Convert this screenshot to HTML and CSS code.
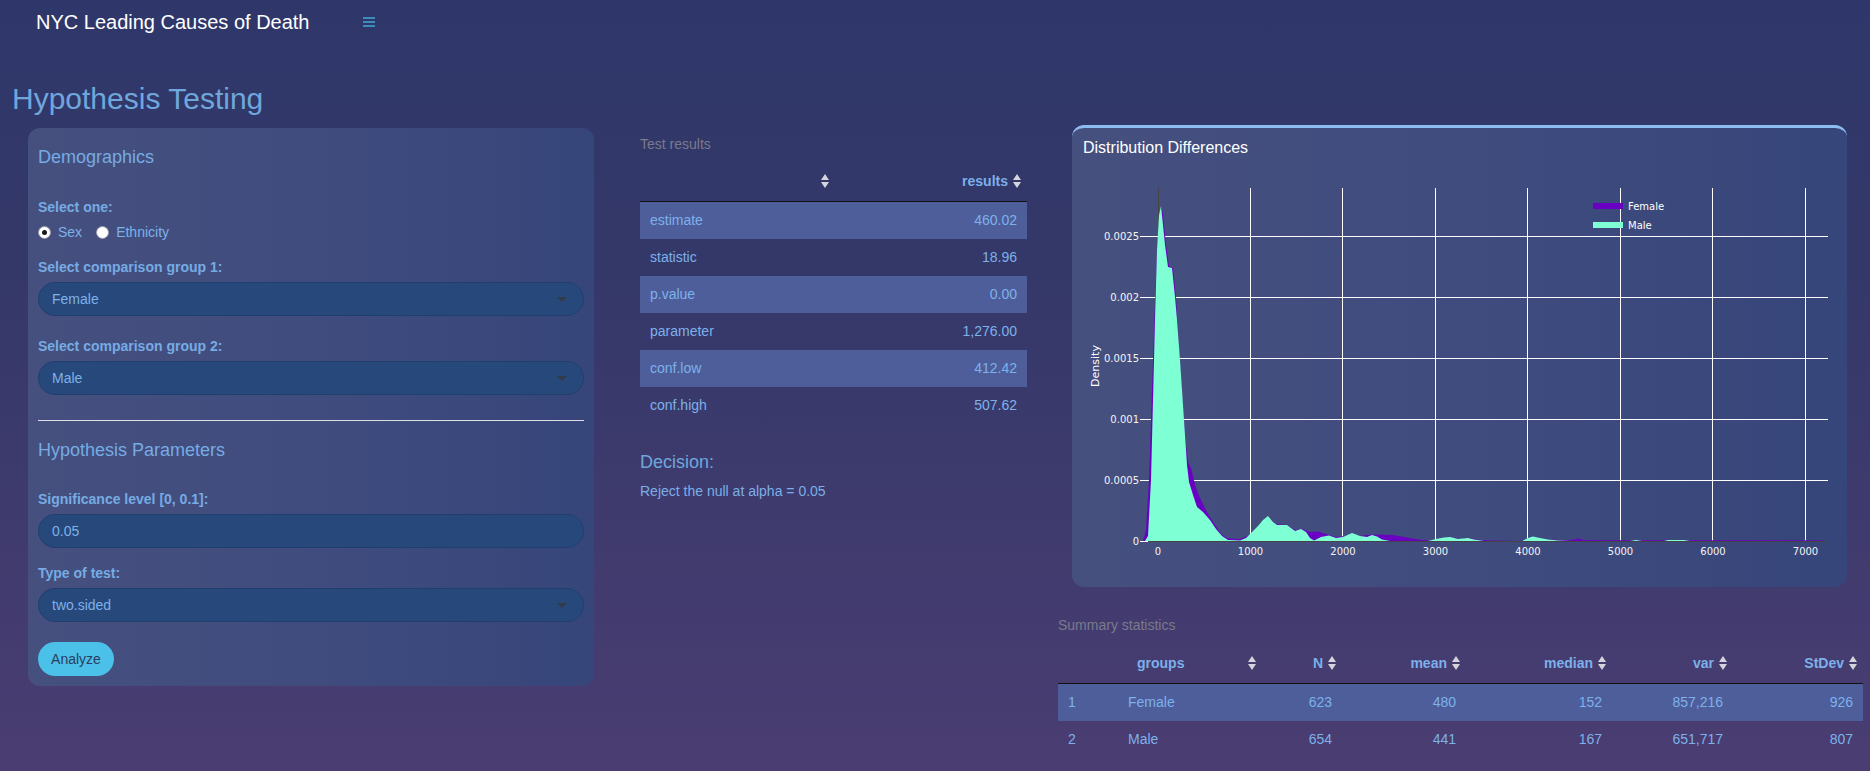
FILE: index.html
```html
<!DOCTYPE html>
<html>
<head>
<meta charset="utf-8">
<title>NYC Leading Causes of Death</title>
<link rel="stylesheet" href="styles.css">
</head>
<body>
<header class="topbar">
  <span class="brand">NYC Leading Causes of Death</span>
  <svg class="burger" width="12" height="10" viewBox="0 0 12 10"><rect x="0" y="0" width="12" height="2"/><rect x="0" y="4" width="12" height="2"/><rect x="0" y="8" width="12" height="2"/></svg>
</header>
<main class="content">
  <h2 class="page-title">Hypothesis Testing</h2>
  <div class="row">
    <section class="col-left">
      <div class="box">
        <h3 class="box-title">Demographics</h3>
        <span class="lbl lbl-first">Select one:</span>
        <div class="radios">
          <label class="radio"><span class="rb checked"></span>Sex</label>
          <label class="radio radio-2"><span class="rb"></span>Ethnicity</label>
        </div>
        <span class="lbl lbl-g1">Select comparison group 1:</span>
        <div class="select"><span>Female</span><span class="caret"></span></div>
        <span class="lbl lbl-g2">Select comparison group 2:</span>
        <div class="select"><span>Male</span><span class="caret"></span></div>
        <hr class="divider">
        <h3 class="box-title">Hypothesis Parameters</h3>
        <span class="lbl lbl-sig">Significance level [0, 0.1]:</span>
        <div class="select"><span>0.05</span></div>
        <span class="lbl lbl-type">Type of test:</span>
        <div class="select"><span>two.sided</span><span class="caret"></span></div>
        <button class="btn">Analyze</button>
      </div>
    </section>

    <section class="col-mid">
      <div class="caption">Test results</div>
      <table class="dt dt-test">
        <colgroup><col class="c-name"><col class="c-res"></colgroup>
        <thead>
          <tr>
            <th><div class="th-in"><span></span><svg class="sort" width="8" height="16" viewBox="0 0 8 16"><path d="M0 7L4 1L8 7Z M0 9L8 9L4 15Z"/></svg></div></th>
            <th><div class="th-in"><span>results</span><svg class="sort" width="8" height="16" viewBox="0 0 8 16"><path d="M0 7L4 1L8 7Z M0 9L8 9L4 15Z"/></svg></div></th>
          </tr>
        </thead>
        <tbody>
          <tr class="odd"><td>estimate</td><td class="num">460.02</td></tr>
          <tr><td>statistic</td><td class="num">18.96</td></tr>
          <tr class="odd"><td>p.value</td><td class="num">0.00</td></tr>
          <tr><td>parameter</td><td class="num">1,276.00</td></tr>
          <tr class="odd"><td>conf.low</td><td class="num">412.42</td></tr>
          <tr><td>conf.high</td><td class="num">507.62</td></tr>
        </tbody>
      </table>
      <h4 class="decision">Decision:</h4>
      <p class="decision-text">Reject the null at alpha = 0.05</p>
    </section>

    <section class="col-right">
      <div class="plot-box">
        <div class="plot-title">Distribution Differences</div>
        <svg class="plot" width="775" height="420" viewBox="1072 158 775 420">
          <g class="grid" stroke="#ffffff" stroke-width="1">
            <line x1="1250.5" y1="188" x2="1250.5" y2="541"/>
            <line x1="1342.5" y1="188" x2="1342.5" y2="541"/>
            <line x1="1435.5" y1="188" x2="1435.5" y2="541"/>
            <line x1="1527.5" y1="188" x2="1527.5" y2="541"/>
            <line x1="1620.5" y1="188" x2="1620.5" y2="541"/>
            <line x1="1712.5" y1="188" x2="1712.5" y2="541"/>
            <line x1="1805.5" y1="188" x2="1805.5" y2="541"/>
            <line x1="1140" y1="236.5" x2="1828" y2="236.5"/>
            <line x1="1140" y1="297.5" x2="1828" y2="297.5"/>
            <line x1="1140" y1="358.5" x2="1828" y2="358.5"/>
            <line x1="1140" y1="419.5" x2="1828" y2="419.5"/>
            <line x1="1140" y1="480.5" x2="1828" y2="480.5"/>
            <line x1="1140" y1="541.5" x2="1148" y2="541.5"/>
          </g>
          <g stroke="#444444" stroke-width="1">
            <line x1="1158.5" y1="188" x2="1158.5" y2="541"/>
            <line x1="1148" y1="541.5" x2="1828" y2="541.5"/>
          </g>
          <path fill="#6a00c2" d="M1143,541 L1146,530 L1149,480 L1151,420 L1154,330 L1157,250 L1160,212 L1161.5,207 L1163,215 L1166,245 L1169,266 L1173,268 L1176,298 L1179,350 L1183,410 L1186,445 L1188,462 L1191,468 L1193,476 L1196,488 L1200,498 L1205,508 L1208,514 L1215,525 L1222,535 L1228,538.5 L1240,539 L1250,535 L1258,528 L1264,521 L1268,517 L1276,524 L1287,525 L1295,530 L1302,529 L1310,532 L1318,531.5 L1326,534 L1336,537 L1345,536 L1352,534 L1360,536 L1366,535 L1376,534.5 L1392,535 L1402,536.5 L1412,538.5 L1422,540 L1432,540.5 L1450,537.5 L1460,539 L1470,538.5 L1480,540 L1492,540.5 L1520,541 L1533,537 L1546,539.5 L1560,540 L1572,540 L1578,538.5 L1584,540 L1600,540.3 L1700,540.3 L1760,540.2 L1800,540.3 L1824,540.4 L1824,541 Z"/>
          <path fill="#7fffd4" d="M1145,541 L1148,536 L1151,480 L1153,400 L1155,320 L1157,250 L1159,215 L1161,206 L1163,225 L1165,245 L1168,267 L1172,268 L1175,297 L1177,320 L1180,360 L1184,420 L1187,465 L1189,482 L1193,495 L1197,507 L1203,512 L1210,520 L1216,529 L1222,536 L1228,540 L1240,540.5 L1246,538 L1251,533 L1258,526 L1263,520 L1268,516 L1273,522 L1277,525 L1287,525 L1291,528 L1295,531 L1301,529 L1306,532 L1310,538 L1314,540.5 L1321,537 L1329,535.5 L1336,538 L1343,537 L1352,533 L1360,536 L1367,537 L1372,535 L1377,536.5 L1382,539.5 L1390,541 L1428,541 L1436,539 L1444,537.5 L1450,537 L1458,539 L1463,538.5 L1468,538 L1474,539.5 L1484,541 L1522,541 L1528,538 L1533,536.5 L1540,538 L1548,539.5 L1558,540.5 L1570,541 L1630,541 L1636,540 L1642,541 L1664,541 L1668,540 L1684,540 L1690,541 Z"/>
          <g class="ticks" fill="#f4f4f4" font-size="10">
            <text x="1139" y="240" text-anchor="end">0.0025</text>
            <text x="1139" y="301" text-anchor="end">0.002</text>
            <text x="1139" y="362" text-anchor="end">0.0015</text>
            <text x="1139" y="423" text-anchor="end">0.001</text>
            <text x="1139" y="484" text-anchor="end">0.0005</text>
            <text x="1139" y="545" text-anchor="end">0</text>
            <text x="1158" y="555" text-anchor="middle">0</text>
            <text x="1250.5" y="555" text-anchor="middle">1000</text>
            <text x="1343" y="555" text-anchor="middle">2000</text>
            <text x="1435.5" y="555" text-anchor="middle">3000</text>
            <text x="1528" y="555" text-anchor="middle">4000</text>
            <text x="1620.5" y="555" text-anchor="middle">5000</text>
            <text x="1713" y="555" text-anchor="middle">6000</text>
            <text x="1805.5" y="555" text-anchor="middle">7000</text>
          </g>
          <text class="axis-title" x="1099" y="366" text-anchor="middle" transform="rotate(-90 1099 366)" fill="#ffffff" font-size="11">Density</text>
          <g class="legend">
            <rect x="1593" y="203" width="30" height="6" fill="#6a00c2"/>
            <rect x="1593" y="222" width="30" height="6" fill="#7fffd4"/>
            <text x="1628" y="209.5" fill="#ffffff" font-size="10">Female</text>
            <text x="1628" y="228.5" fill="#ffffff" font-size="10">Male</text>
          </g>
        </svg>
      </div>

      <div class="caption caption-sum">Summary statistics</div>
      <table class="dt dt-sum">
        <colgroup>
          <col class="s-rn"><col class="s-grp"><col class="s-n"><col class="s-mean"><col class="s-med"><col class="s-var"><col class="s-sd">
        </colgroup>
        <thead>
          <tr>
            <th class="th-empty"></th>
            <th class="th-left"><div class="th-in th-between"><span>groups</span><svg class="sort" width="8" height="16" viewBox="0 0 8 16"><path d="M0 7L4 1L8 7Z M0 9L8 9L4 15Z"/></svg></div></th>
            <th><div class="th-in"><span>N</span><svg class="sort" width="8" height="16" viewBox="0 0 8 16"><path d="M0 7L4 1L8 7Z M0 9L8 9L4 15Z"/></svg></div></th>
            <th><div class="th-in"><span>mean</span><svg class="sort" width="8" height="16" viewBox="0 0 8 16"><path d="M0 7L4 1L8 7Z M0 9L8 9L4 15Z"/></svg></div></th>
            <th><div class="th-in"><span>median</span><svg class="sort" width="8" height="16" viewBox="0 0 8 16"><path d="M0 7L4 1L8 7Z M0 9L8 9L4 15Z"/></svg></div></th>
            <th><div class="th-in"><span>var</span><svg class="sort" width="8" height="16" viewBox="0 0 8 16"><path d="M0 7L4 1L8 7Z M0 9L8 9L4 15Z"/></svg></div></th>
            <th><div class="th-in"><span>StDev</span><svg class="sort" width="8" height="16" viewBox="0 0 8 16"><path d="M0 7L4 1L8 7Z M0 9L8 9L4 15Z"/></svg></div></th>
          </tr>
        </thead>
        <tbody>
          <tr class="odd"><td>1</td><td>Female</td><td class="num">623</td><td class="num">480</td><td class="num">152</td><td class="num">857,216</td><td class="num">926</td></tr>
          <tr><td>2</td><td>Male</td><td class="num">654</td><td class="num">441</td><td class="num">167</td><td class="num">651,717</td><td class="num">807</td></tr>
        </tbody>
      </table>
    </section>
  </div>
</main>
</body>
</html>
```

FILE: styles.css
```css
* { box-sizing: border-box; }

html, body { margin: 0; padding: 0; }

body {
  width: 1870px;
  height: 771px;
  overflow: hidden;
  font-family: "Liberation Sans", Arial, sans-serif;
  font-size: 14px;
  line-height: 20px;
  color: #7db1ea;
  background: linear-gradient(180deg, #2f376a 0%, #343869 35%, #4a3d72 100%);
}

/* top bar */
.topbar {
  display: flex;
  align-items: center;
  height: 44px;
}
.brand {
  margin-left: 36px;
  font-size: 20px;
  line-height: 20px;
  color: #ffffff;
}
.burger {
  margin-left: 53px;
  fill: #3c8dbc;
}

.page-title {
  margin: 38px 0 10px 12px;
  font-size: 30px;
  line-height: 33px;
  font-weight: normal;
  color: #6fa7dd;
}

.row {
  display: flex;
  align-items: flex-start;
}

/* left column */
.col-left {
  margin-left: 28px;
  width: 566px;
  margin-top: 3px;
}
.box {
  border-radius: 12px;
  background: linear-gradient(90deg, #45507f 0%, #404c7e 50%, #36457a 100%);
  padding: 19px 10px 10px 10px;
  display: flex;
  flex-direction: column;
  align-items: stretch;
}
.box-title {
  margin: 0;
  font-size: 18px;
  line-height: 20px;
  font-weight: normal;
  color: #76abe3;
}
.lbl {
  display: block;
  font-weight: bold;
  color: #76abe3;
  line-height: 20px;
  margin-bottom: 5px;
}
.lbl-first { margin-top: 30px; margin-bottom: 5px; }
.lbl-g1 { margin-top: 15px; }
.lbl-g2 { margin-top: 20px; }
.lbl-sig { margin-top: 29px; }
.lbl-type { margin-top: 15px; }

.radios {
  display: flex;
  align-items: center;
  height: 20px;
  color: #7db1ea;
}
.radio {
  display: flex;
  align-items: center;
}
.radio-2 { margin-left: 14px; }
.rb {
  width: 13px;
  height: 13px;
  border-radius: 50%;
  background: #ffffff;
  border: 1px solid #9a9aa8;
  margin-right: 7px;
  display: flex;
  align-items: center;
  justify-content: center;
}
.rb.checked::after {
  content: "";
  width: 5px;
  height: 5px;
  border-radius: 50%;
  background: #1a1a1a;
}

.select {
  height: 34px;
  border-radius: 17px;
  background: #27487a;
  border: 1px solid #213f6c;
  display: flex;
  align-items: center;
  justify-content: space-between;
  padding: 0 16px 0 13px;
  color: #7db1ea;
}
.caret {
  width: 0;
  height: 0;
  border-left: 5px solid transparent;
  border-right: 5px solid transparent;
  border-top: 5px solid #333a4a;
}

.divider {
  margin: 25px 0 19px 0;
  border: 0;
  border-top: 1px solid #dedee6;
  height: 0;
}

.btn {
  align-self: flex-start;
  margin-top: 20px;
  height: 34px;
  width: 76px;
  border: 0;
  border-radius: 17px;
  background: #4bc0e8;
  color: #2b3d60;
  font-family: "Liberation Sans", Arial, sans-serif;
  font-size: 14px;
  padding: 0;
}

/* middle column */
.col-mid {
  margin-left: 46px;
  width: 387px;
  margin-top: 9px;
}
.caption {
  color: #7a7a8c;
  line-height: 20px;
  margin-bottom: 7px;
}

.dt {
  border-collapse: collapse;
  table-layout: fixed;
  width: 100%;
}
.dt th {
  padding: 10px 6px 10px 10px;
  line-height: 20px;
  font-weight: bold;
  color: #7cb0ea;
  border-bottom: 1px solid #111111;
}
.th-in {
  display: flex;
  align-items: center;
  justify-content: flex-end;
  gap: 5px;
}
.th-between { justify-content: space-between; }
.dt th.th-left { padding-left: 19px; }
.sort { fill: #d4d4dc; flex: none; }

.dt td {
  padding: 8px 10px 9px 10px;
  line-height: 20px;
  color: #7db1ea;
  white-space: nowrap;
}
.dt td.num { text-align: right; }
.dt tr.odd td { background: #4e5e9b; }

.c-name { width: 195px; }
.c-res { width: 192px; }

.decision {
  margin: 28px 0 0 0;
  font-size: 18px;
  line-height: 20px;
  font-weight: normal;
  color: #6fa7dd;
}
.decision-text {
  margin: 9px 0 0 0;
  color: #7bafe6;
}

/* right column */
.col-right {
  margin-left: 31px;
  width: 805px;
}
.plot-box {
  margin: 0 16px 0 14px;
  border-top: 3px solid #8dbdf0;
  border-radius: 12px;
  background: linear-gradient(90deg, #45507f 0%, #404c7e 50%, #36457a 100%);
  padding: 10px 0 9px 0;
}
.plot-title {
  margin-left: 11px;
  color: #ffffff;
  font-size: 16px;
  line-height: 20px;
}
.plot {
  display: block;
  font-family: "DejaVu Sans", Verdana, sans-serif;
}

.caption-sum {
  margin-top: 28px;
  margin-bottom: 8px;
}

.s-rn { width: 60px; }
.s-grp { width: 144px; }
.s-n { width: 80px; }
.s-mean { width: 124px; }
.s-med { width: 146px; }
.s-var { width: 121px; }
.s-sd { width: 130px; }
```
